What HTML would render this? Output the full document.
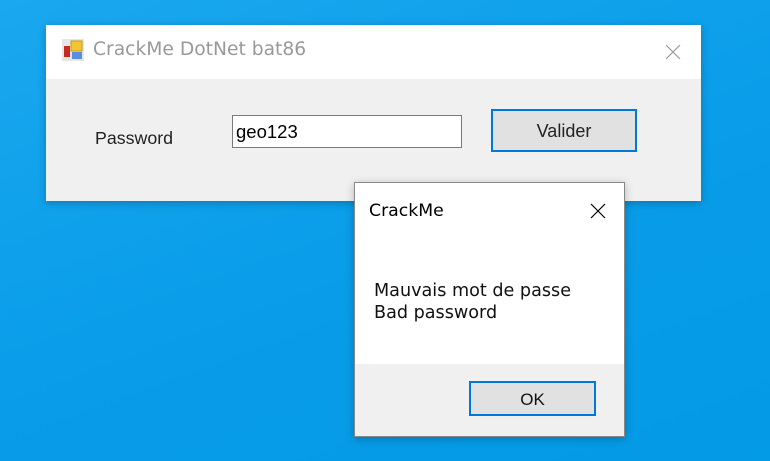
<!DOCTYPE html><html><head><style>
body{margin:0;width:770px;height:461px;overflow:hidden;position:relative;background:linear-gradient(160deg,#1aa8ef 0%,#0a9de9 50%,#039ae6 100%);font-family:"Liberation Sans",sans-serif}
.a{position:absolute;box-sizing:border-box}
</style></head><body>
<div class="a" style="left:46px;top:25px;width:655px;height:176px;background:#f0f0f0;box-shadow:0 2px 8px rgba(0,0,0,.25)">
 <div class="a" style="left:0;top:0;width:655px;height:54px;background:#fff"></div>
 <svg class="a" style="left:16px;top:14px" width="22" height="22" viewBox="0 0 22 22"><rect x="0" y="0" width="22" height="22" fill="#e6e6e6"/><rect x="9" y="2" width="11" height="10" fill="#f4c431" stroke="#c89a10"/><rect x="2" y="7" width="6" height="11" fill="#c42a1e"/><rect x="10" y="13" width="10" height="7" fill="#5a8ee0"/></svg>
 <div class="a" style="left:47px;top:14px;color:#999;font-family:'DejaVu Sans',sans-serif;font-size:18.7px">CrackMe DotNet bat86</div>
 <svg class="a" style="left:619px;top:19px" width="16" height="16"><path d="M1 1L15 15M15 1L1 15" stroke="#999" stroke-width="1.2"/></svg>
 <div class="a" style="left:49px;top:103px;font-size:17.8px;color:#222">Password</div>
 <div class="a" style="left:186px;top:90px;width:230px;height:33px;background:#fff;border:1px solid #7a7a7a;padding:5px 0 0 3px;font-size:18.5px;color:#000">geo123</div>
 <div class="a" style="left:445px;top:84px;width:146px;height:43px;background:#e1e1e1;border:2px solid #0078d7;text-align:center;line-height:40px;font-size:18px;color:#222">Valider</div>
</div>
<div class="a" style="left:354px;top:182px;width:271px;height:255px;background:#f0f0f0;border:1px solid #888;box-shadow:0 2px 8px rgba(0,0,0,.25)">
 <div class="a" style="left:0;top:0;width:269px;height:181px;background:#fff"></div>
 <div class="a" style="left:14px;top:18px;font-family:'DejaVu Sans',sans-serif;font-size:17.3px;color:#000">CrackMe</div>
 <svg class="a" style="left:235px;top:20px" width="16" height="16"><path d="M1 1L15 15M15 1L1 15" stroke="#000" stroke-width="1.2"/></svg>
 <div class="a" style="left:19px;top:97px;font-family:'DejaVu Sans',sans-serif;font-size:17.6px;line-height:22px;color:#111">Mauvais mot de passe<br>Bad password</div>
 <div class="a" style="left:114px;top:198px;width:127px;height:35px;background:#e1e1e1;border:2px solid #0078d7;text-align:center;line-height:33px;font-size:17px;color:#111">OK</div>
</div>
</body></html>
